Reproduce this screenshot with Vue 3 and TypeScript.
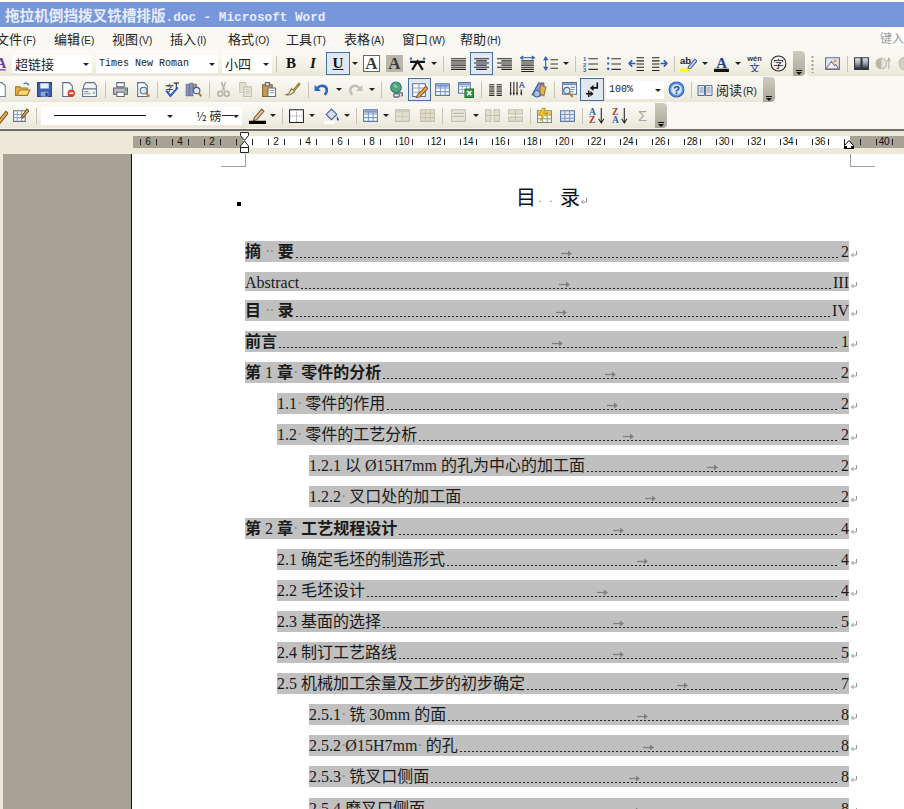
<template>
  <div class="word-window">
    <div class="title-bar">拖拉机倒挡拨叉铣槽排版<span class="title-latin">.doc - Microsoft Word</span></div>

    <div class="menu-bar">
      <span v-for="m in menus" :key="m[0]" class="menu-item">{{ m[0] }}<small>({{ m[1] }})</small></span>
      <span class="ask-box">键入</span>
    </div>

    <div class="toolbars">
      <div v-for="(row, r) in toolRows" :key="r" class="tool-line">
        <div v-for="(bar, b) in row" :key="b" class="toolbar" :class="bar.cls" :style="{ marginLeft: bar.left + 'px', width: bar.width + 'px' }">
          <template v-for="(it, i) in bar.items" :key="i">
            <div v-if="it.k === 'combo'" class="combo" :class="it.cls" :style="{ width: it.w + 'px' }">
              <span class="combo-text">{{ it.text }}</span>
              <i class="combo-line" v-if="it.line"></i>
              <i class="caret"></i>
            </div>
            <span v-else-if="it.k === 'sep'" class="sep" :style="{ width: it.w + 'px' }"></span>
            <span v-else-if="it.k === 'gap'" :style="{ width: it.w + 'px', flex: 'none' }"></span>
            <span v-else-if="it.k === 'arrow'" class="drop" :style="{ width: it.w + 'px' }"><i class="caret"></i></span>
            <span v-else-if="it.k === 'grip'" class="grip"></span>
            <span v-else-if="it.k === 'read'" class="read-btn" :style="{ width: it.w + 'px' }">
              <svg width="16" height="16" viewBox="0 0 16 16" v-html="icons.read"></svg>
              <span>阅读<small>(R)</small></span>
            </span>
            <span v-else-if="it.k === 'txt'" class="btn" :class="[it.cls, { active: it.on }]" :style="{ width: it.w + 'px' }">{{ it.text }}</span>
            <span v-else class="btn" :class="{ active: it.on }" :style="{ width: it.w + 'px', marginLeft: it.ml ? it.ml + 'px' : undefined }">
              <svg width="17" height="17" viewBox="0 0 16 16" v-html="icons[it.n!]"></svg>
            </span>
          </template>
          <span v-if="bar.chevron" class="chevron"><i></i></span>
        </div>
      </div>
    </div>

    <div class="ruler-band">
      <div class="ruler">
        <span v-for="c in rulerCells" :key="c.k" class="cell" :class="{ tick: c.tick }">{{ c.label }}</span>
        <svg class="indent-left" width="11" height="22" viewBox="0 0 11 22">
          <path d="M1.5 .5h8v3l-4 5-4-5zM5.500 9l4 5v1.500h-8V14zM1.500 15.500h8v5h-8z" fill="#fff" stroke="#222" />
        </svg>
        <svg class="indent-right" width="12" height="9" viewBox="0 0 12 9">
          <path d="M6 .5l4.500 5v3h-9v-3z" fill="#fff" stroke="#000" /><path d="M1 6h3v2.500H1zM8 6h3v2.500H8z" fill="#000" />
        </svg>
      </div>
    </div>

    <div class="doc-area">
      <aside class="side-gutter"></aside>
      <main class="page">
        <i class="crop crop-left"></i>
        <i class="crop crop-right"></i>
        <i class="anchor-mark"></i>
        <h1 class="toc-title">目<em>··</em>录<svg class="ret big" width="8" height="8" viewBox="0 0 8 8"><path d="M6.500 1v4H1.500M3.500 3l-2 2 2 2" fill="none" stroke="#999" /></svg></h1>
        <div class="toc">
          <div v-for="row in tocRows" :key="row.text" class="toc-row" :class="[`lv${row.lv}`, { bold: row.bold, short: row.short, tight: row.tight, wide: row.wide }]">
            <span class="toc-text" v-html="row.text"></span>
            <span class="leader"></span>
            <span class="toc-num">{{ row.num }}</span>
            <svg class="tab-arrow" :style="{ left: row.tab - indent[row.lv] - 5 + 'px' }" width="11" height="7" viewBox="0 0 11 7"><path d="M0 3.500h7" fill="none" stroke="#808080" stroke-width="1.300" /><path d="M7 .5l4 3-4 3z" fill="#808080" /></svg>
            <svg class="ret" width="8" height="8" viewBox="0 0 8 8"><path d="M6.500 1v4H1.500M3.500 3l-2 2 2 2" fill="none" stroke="#999" /></svg>
          </div>
        </div>
      </main>
    </div>
  </div>
</template>

<script setup lang="ts">
import { computed } from 'vue'

interface Item {
  k: string
  n?: string
  w?: number
  ml?: number
  on?: boolean
  text?: string
  cls?: string
  line?: boolean
}

interface Bar {
  left: number
  width: number
  cls?: string
  chevron?: boolean
  items: Item[]
}

interface TocRow {
  text: string
  lv: number
  tab: number
  num: string
  bold?: boolean
  short?: boolean
  tight?: boolean
  wide?: boolean
}

const indent: Record<number, number> = { 1: 245, 2: 277, 3: 309 }

const menus = [
  ['文件', 'F'], ['编辑', 'E'], ['视图', 'V'], ['插入', 'I'], ['格式', 'O'],
  ['工具', 'T'], ['表格', 'A'], ['窗口', 'W'], ['帮助', 'H']
]

const lines = (rows: number[][], color = '#222') =>
  rows.map(r => `<path d="M${r[0]} ${r[2]}.5H${r[1]}" stroke="${color}"/>`).join('')

const pageBase = '<path d="M3.500 1.500h6l3 3v10h-9z" fill="#fff" stroke="#5a6a86"/>'

const icons: Record<string, string> = {
  styleA: '<text x="2" y="12" font-size="13" font-weight="700" font-family="Liberation Serif" fill="#6a3fa0">A</text><path d="M1 14h10" stroke="#6a3fa0"/>',
  newdoc: '<path d="M3.500 1.500h6l3 3v10h-9z" fill="#fff" stroke="#6d7f9e"/>',
  open: '<path d="M1.500 5.500h4l1 1h6v7h-11z" fill="#e8b64a" stroke="#a87a20"/><path d="M3 13.500l2-5h10l-2.500 5z" fill="#f7d87c" stroke="#a87a20"/><path d="M9 3c2-2 4-1 5 1" fill="none" stroke="#2c6fb7"/>',
  save: '<path d="M1.500 1.500h13v13h-13z" fill="#3f62b2" stroke="#24408a"/><path d="M4 2h8v5H4z" fill="#e9eef8"/><path d="M4.500 10h7v4.500h-7z" fill="#8da6da"/><path d="M9 11h2v3H9z" fill="#24408a"/>',
  perm: pageBase + '<circle cx="11.500" cy="11.500" r="3.500" fill="#d9432f"/><path d="M9.500 11.500h4" stroke="#fff" stroke-width="1.500"/>',
  mail: '<path d="M4.500 1.500h8l2 3v3h-12v-3z" fill="#eef2f8" stroke="#66728a"/><path d="M1.500 7.500h13v7h-13z" fill="#f6f6f4" stroke="#66728a"/><path d="M3 10h4M3 12h6" stroke="#8c96aa"/><path d="M11 10h2v2h-2z" fill="#9db2d5"/>',
  print: '<path d="M4.500 1.500h7v4h-7z" fill="#fff" stroke="#667"/><path d="M1.500 6.500h13v6h-13z" fill="#b9bcc6" stroke="#5c6070"/><path d="M4.500 10.500h7v4h-7z" fill="#fff" stroke="#667"/><path d="M12 8h2v1.500h-2z" fill="#38a838"/>',
  preview: pageBase + '<circle cx="9" cy="9" r="3.200" fill="#d5e8f8" stroke="#5a6a86"/><path d="M11.500 11.500l3 3" stroke="#c08a2a" stroke-width="2"/>',
  spell: '<text x="2" y="9" font-size="8" font-family="Noto Sans CJK SC" fill="#333">字</text><path d="M10 2h5M12.500 2v5" stroke="#333"/><path d="M3 9l4 5 7-8" fill="none" stroke="#2d62c4" stroke-width="2"/>',
  research: '<path d="M1 3h3v11H1zM4.500 2h3v12h-3z" fill="#8a94bd" stroke="#555b80" stroke-width=".6"/><path d="M8 3h3v7H8z" fill="#c28f6a" stroke="#6b5a50" stroke-width=".6"/><circle cx="11" cy="9" r="3" fill="#dcecf8" stroke="#4b5b80"/><path d="M13 11.500l2.500 3" stroke="#b9822b" stroke-width="2"/>',
  cut: '<path d="M6 1l3 8M10 1L7 9" stroke="#b5b2a5" stroke-width="1.400"/><circle cx="5" cy="12" r="2.300" fill="none" stroke="#b5b2a5" stroke-width="1.500"/><circle cx="11" cy="12" r="2.300" fill="none" stroke="#b5b2a5" stroke-width="1.500"/>',
  copy: '<path d="M2.500 1.500h6v9h-6z" fill="#e4e1d5" stroke="#c9c6b8"/><path d="M6.500 5.500h7v9h-7z" fill="#eceadf" stroke="#c0bdad"/><path d="M8 8h4M8 10h4M8 12h4" stroke="#c9c6b8"/>',
  paste: '<path d="M2.500 3.500h9v11h-9z" fill="#c79a5a" stroke="#84602c"/><path d="M5 1.500h4v3H5z" fill="#e8e4d0" stroke="#667"/><path d="M7.500 6.500h7v8h-7z" fill="#fff" stroke="#5a6a86"/><path d="M9 9h4M9 11h4" stroke="#8899b5"/>',
  painter: '<path d="M9 8l5-6 1 1-5 6z" fill="#f0d060" stroke="#8a7a30"/><path d="M2 13c3-1 4-3 5-6l3 3c-2 2-4 4-8 3z" fill="#e8e2bc" stroke="#8a7a50"/>',
  undo: '<path d="M4 7c3-4 9-3 9 2 0 2-1 3-2 4" fill="none" stroke="#2a66c8" stroke-width="2.500"/><path d="M1.500 3.500v6h6z" fill="#2a66c8"/>',
  redo: '<path d="M12 7C9 3 3 4 3 9c0 2 1 3 2 4" fill="none" stroke="#c4c2b6" stroke-width="2.500"/><path d="M14.500 3.500v6h-6z" fill="#c4c2b6"/>',
  link: '<circle cx="7.500" cy="6" r="5" fill="#4fa86c" stroke="#2f6f88"/><path d="M5 3c2 0 3 1 4 3-2 1-3 0-4-3z" fill="#8fc8e8"/><path d="M6 12h4a2 2 0 0 1 0 3H6a2 2 0 0 1 0-3zM10 11h3a2 2 0 0 1 0 3h-1" fill="none" stroke="#667088" stroke-width="1.300"/>',
  tablesEdit: '<path d="M1.500 2.500h12v12h-12z" fill="#fff" stroke="#60708c"/><path d="M1.500 6.500h12M1.500 10.500h12M7.500 2.500v12" stroke="#8fa0bb"/><path d="M6 13l8-8 2 2-8 8-3 .5z" fill="#e8b050" stroke="#87622a"/>',
  table: '<path d="M1.500 2.500h13v11h-13z" fill="#fff" stroke="#5a76a8"/><path d="M2 3h12v2.500H2z" fill="#7b9bd0"/><path d="M1.500 6.500h13M1.500 10h13M6 3v10.500M10.500 3v10.500" stroke="#7b97c4"/>',
  tableExcel: '<path d="M1.500 1.500h11v10h-11z" fill="#fff" stroke="#5a76a8"/><path d="M2 2h10v2H2z" fill="#7b9bd0"/><path d="M1.500 5h11M1.500 8h11M5 2v10M9 2v10" stroke="#9cb2d2"/><path d="M7.500 7.500h8v8h-8z" fill="#3d9a4d" stroke="#216a30"/><path d="M9.500 9.500l4 4M13.500 9.500l-4 4" stroke="#fff" stroke-width="1.300"/>',
  cols: lines([[2, 7, 3], [2, 7, 5], [2, 7, 7], [2, 7, 9], [2, 7, 11], [2, 7, 13], [9, 14, 3], [9, 14, 5], [9, 14, 7], [9, 14, 9], [9, 14, 11], [9, 14, 13]]),
  textdir: '<path d="M2.500 1v11M5.500 1v11M8.500 1v11" stroke="#222"/><path d="M1.500 11l1 3 1-3zM4.500 11l1 3 1-3zM7.500 11l1 3 1-3zM11.500 11l1 3 1-3z" fill="#222"/><path d="M12.500 8v4" stroke="#222"/><text x="10" y="7" font-size="8" font-weight="700" font-family="Liberation Sans" fill="#4a62a8">A</text>',
  wordart: '<path d="M2 13L8 2h5v7h-3v5z" fill="#7f9ad8" stroke="#45609c"/><path d="M10 3l5 3-2 8-4-2z" fill="#e8b050" stroke="#98702a"/><circle cx="6.500" cy="12" r="3" fill="#aebde2" stroke="#45609c"/>',
  docmap: '<path d="M1.500 1.500h13v11h-13z" fill="#fff" stroke="#55708f"/><path d="M2 2h12v2H2z" fill="#6f92c6"/><path d="M9 6h4M9 8h4M9 10h3" stroke="#7f93b0"/><circle cx="5.500" cy="9" r="3" fill="#d5e8f8" stroke="#5a6a86"/><path d="M8 11.500l3 3.500" stroke="#b9822b" stroke-width="2"/>',
  expand: '<path d="M12.500 1.500v5H8" fill="none" stroke="#111" stroke-width="1.500"/><path d="M9 3.500L5.500 6.500 9 9.500z" fill="#111"/><path d="M2 12h6" stroke="#111" stroke-width="1.300"/><path d="M6 9.500l3 2.500-3 2.500z" fill="#111"/><path d="M4.500 9v6" stroke="#111" stroke-width="1.300"/>',
  help: '<circle cx="8" cy="8" r="7" fill="#5d93e2" stroke="#2a5fb4"/><circle cx="8" cy="8" r="5" fill="#d6e6fb"/><text x="8" y="12" text-anchor="middle" font-size="11" font-weight="700" font-family="Liberation Sans" fill="#1d50aa">?</text>',
  read: '<path d="M1 3.500h6.500v10H1zM8.500 3.500H15v10H8.500z" fill="#e2e7f2" stroke="#5f6f8c"/><path d="M2.500 6h4M2.500 8h4M2.500 10h4M9.500 6h4M9.500 8h4M9.500 10h4" stroke="#8b99b3"/>',
  justify: lines([[1, 15, 3], [1, 15, 5], [1, 15, 7], [1, 15, 9], [1, 15, 11], [1, 15, 13]], '#222'),
  center: lines([[1, 15, 3], [3, 13, 5], [1, 15, 7], [3, 13, 9], [1, 15, 11], [3, 13, 13]], '#222'),
  right: lines([[1, 15, 3], [5, 15, 5], [1, 15, 7], [5, 15, 9], [1, 15, 11], [5, 15, 13]], '#222'),
  distribute: lines([[2, 14, 5], [2, 14, 7], [2, 14, 9], [2, 14, 11], [2, 14, 13], [2, 14, 15]], '#222') + '<path d="M1 2.500h14M4 1L1.500 2.500 4 4M12 1l2.500 1.500L12 4" fill="none" stroke="#2a5fb4"/>',
  spacing: '<path d="M3.500 2.500v11" stroke="#2a5fb4"/><path d="M1 5l2.500-4L6 5zM1 11l2.500 4L6 11z" fill="#2a5fb4"/>' + lines([[8, 15, 4], [8, 15, 8], [8, 15, 12]], '#333'),
  numbered: '<text x="1" y="6" font-size="5.500" font-weight="700" font-family="Liberation Sans" fill="#2a5fb4">1</text><text x="1" y="11" font-size="5.500" font-weight="700" font-family="Liberation Sans" fill="#2a5fb4">2</text><text x="1" y="16" font-size="5.500" font-weight="700" font-family="Liberation Sans" fill="#2a5fb4">3</text>' + lines([[6, 15, 3], [6, 15, 8], [6, 15, 13]], '#333'),
  bullets: '<path d="M2 2h2v2H2zM2 7h2v2H2zM2 12h2v2H2z" fill="#2a5fb4"/>' + lines([[6, 15, 3], [6, 15, 8], [6, 15, 13]], '#333'),
  outdent: lines([[8, 15, 2], [8, 15, 5], [8, 15, 8], [8, 15, 11], [8, 15, 14]], '#222') + '<path d="M1 8h6M4 5L1 8l3 3" fill="none" stroke="#2a5fb4" stroke-width="1.500"/>',
  indent: lines([[1, 8, 2], [1, 8, 5], [1, 8, 8], [1, 8, 11], [1, 8, 14]], '#222') + '<path d="M15 8H9M12 5l3 3-3 3" fill="none" stroke="#2a5fb4" stroke-width="1.500"/>',
  highlight: '<text x="0" y="8" font-size="9" font-weight="700" font-family="Liberation Sans" fill="#222">ab</text><path d="M8 11l6-7 2 1.500-6 7-2.500.5z" fill="#cfd8ea" stroke="#45609c"/><path d="M0 13h9v3H0z" fill="#ffff00"/>',
  fontColor: '<text x="8" y="12" text-anchor="middle" font-size="14" font-weight="700" font-family="Liberation Serif" fill="#25408f">A</text><path d="M1 13h14v3H1z" fill="#111"/>',
  wen: '<text x="8" y="6" text-anchor="middle" font-size="7" font-weight="700" font-family="Liberation Sans" fill="#333">wén</text><text x="8" y="16" text-anchor="middle" font-size="10" font-family="Noto Sans CJK SC" fill="#24408a">文</text>',
  zi: '<circle cx="8" cy="8" r="7" fill="none" stroke="#222"/><text x="8" y="12" text-anchor="middle" font-size="10" font-family="Noto Sans CJK SC" fill="#222">字</text>',
  scaleA: '<path d="M3 14L8 6l5 8M1 6.500h14" fill="none" stroke="#111" stroke-width="2"/><path d="M3 3.500h-2.500M1.800 2v3M15.500 3.500H13M14.200 2v3" stroke="#2a5fb4"/><path d="M8 1v4" stroke="#2a5fb4" opacity="0"/>',
  picture: '<path d="M1.500 2.500h13v11h-13z" fill="#dbe8f6" stroke="#60708c"/><path d="M2 13l5-7 3 4 1-1 3 4z" fill="#f4f4f4" stroke="#8a7a90"/><circle cx="10.500" cy="5.500" r="1.500" fill="#e8a050"/>',
  compare: '<path d="M1.500 2.500h6v11h-6zM8.500 2.500h6v11h-6z" fill="url(#gr)" stroke="#30343d"/><defs><linearGradient id="gr" x1="0" y1="0" x2="0" y2="1"><stop offset="0" stop-color="#f0f1f4"/><stop offset=".5" stop-color="#9a9ca6"/><stop offset="1" stop-color="#22252c"/></linearGradient></defs>',
  contrast: '<circle cx="6" cy="8" r="5" fill="#e6e4da" stroke="#bdbbae"/><path d="M6 3a5 5 0 0 0 0 10z" fill="#b8b6a8"/><path d="M13 13V4M11.500 6L13 3l1.500 3" fill="none" stroke="#b5b3a6"/>',
  bright: '<circle cx="8" cy="8" r="6" fill="#d2d0c4" stroke="#bdbbae"/>',
  pencil: '<path d="M6 14l8-10 2 2-8 10z" fill="#e8b050" stroke="#7a5a28"/>',
  tableProps: '<path d="M1.500 3.500h11v10h-11z" fill="#fff" stroke="#60708c"/><path d="M1.500 7h11M1.500 10h11M5 3.500v10M9 3.500v10" stroke="#8fa0bb"/><path d="M9 9l5-7 2 1.500-6 7z" fill="#e8b050" stroke="#7a5a28"/>',
  borders: '<path d="M1.500 2.500h13v12h-13z" fill="#fff" stroke="#222"/><path d="M8 3v11M2 8.500h12" stroke="#999" stroke-dasharray="1 1"/>',
  fill: '<path d="M3 7l5-5 5 5-5 5z" fill="#d9dfeb" stroke="#45609c"/><path d="M13 8c1 2 2 3 2 4s-2 1-2 0 0-2 0-4z" fill="#2a5fb4"/><path d="M1 13h10v3H1z" fill="#fff"/>',
  pen: '<path d="M5 10l7-8 2 2-7 8-3 1z" fill="#e8c5a0" stroke="#7a5a28"/><path d="M0 13h16v3H0z" fill="#000"/>',
  merge: '<path d="M1.500 2.500h13v11h-13z" fill="#e3dfcf" stroke="#c4c0ae"/><path d="M2 3h12v2H2z" fill="#cfcabb"/><path d="M1.500 9h13M8 5v8" stroke="#d0ccbb"/>',
  split: '<path d="M1.500 2.500h13v11h-13z" fill="#e3dfcf" stroke="#c4c0ae"/><path d="M1.500 6h13M1.500 10h13M6 3v10M10.500 3v10" stroke="#c6c2b1"/>',
  alignCell: '<path d="M1.500 2.500h13v11h-13z" fill="#e8e5d8" stroke="#c4c0ae"/><path d="M3 6h10M3 9h10" stroke="#bdb9a8"/>',
  distRows: '<path d="M1.500 2.500h5v11h-5zM9.500 2.500h5v11h-5z" fill="#e3dfcf" stroke="#c4c0ae"/><path d="M1 8h14" stroke="#c4c0ae"/>',
  distCols: '<path d="M1.500 2.500h13v4h-13zM1.500 9.500h13v4h-13z" fill="#e3dfcf" stroke="#c4c0ae"/><path d="M8 2v12" stroke="#c4c0ae"/>',
  autoFormat: '<path d="M1.500 3.500h13v11h-13z" fill="#fff" stroke="#7a8a60"/><path d="M2 4h12v3H2z" fill="#f0c050"/><path d="M1.500 7.500h13M1.500 11h13M6 4v10M10.500 4v10" stroke="#8fa060"/><path d="M6 1L3 8h3L4 13l6-7H7l2-5z" fill="#f4c830" stroke="#9a7a10" stroke-width=".5"/>',
  tableLight: '<path d="M1.500 3.500h13v10h-13z" fill="#e6ecf6" stroke="#5a76a8"/><path d="M1.500 7h13M1.500 10.500h13M5.500 3.500v10M10 3.500v10" stroke="#7b97c4"/>',
  sortAZ: '<text x="1" y="7.500" font-size="9" font-weight="700" font-family="Liberation Serif" fill="#2a5fb4">A</text><text x="1" y="15.500" font-size="9" font-weight="700" font-family="Liberation Serif" fill="#a83a2a">Z</text><path d="M12.500 1v13M10 11l2.500 4 2.500-4" fill="none" stroke="#222"/>',
  sortZA: '<text x="1" y="7.500" font-size="9" font-weight="700" font-family="Liberation Serif" fill="#a83a2a">Z</text><text x="1" y="15.500" font-size="9" font-weight="700" font-family="Liberation Serif" fill="#2a5fb4">A</text><path d="M12.500 1v13M10 11l2.500 4 2.500-4" fill="none" stroke="#222"/>',
  sigma: '<text x="8" y="13" text-anchor="middle" font-size="14" font-family="Liberation Sans" fill="#aaa89c">Σ</text>'
}

const ic = (n: string, w = 23, on = false): Item => ({ k: 'ic', n, w, on })
const sep = (w = 8): Item => ({ k: 'sep', w })
const drop = (w = 10): Item => ({ k: 'arrow', w })
const gap = (w: number): Item => ({ k: 'gap', w })
const combo = (text: string, w: number, cls = ''): Item => ({ k: 'combo', text, w, cls })
const txt = (text: string, w: number, cls: string, on = false): Item => ({ k: 'txt', text, w, cls, on })

const toolRows: Bar[][] = [
  [
    {
      left: -8, width: 813, chevron: true,
      items: [
        ic('styleA', 20), combo('超链接', 80, 'cjk'), gap(4), combo('Times New Roman', 122, 'mono'), gap(4),
        combo('小四', 50, 'cjk'), sep(), txt('B', 22, 'fmt-b'), txt('I', 22, 'fmt-i'), gap(2),
        txt('U', 24, 'fmt-u', true), drop(), txt('A', 23, 'fmt-box'), txt('A', 23, 'fmt-shade'), ic('scaleA'), drop(), sep(),
        ic('justify'), ic('center', 23, true), ic('right'), ic('distribute'), ic('spacing', 22), drop(), sep(),
        ic('numbered'), ic('bullets'), ic('outdent'), ic('indent'), sep(6),
        ic('highlight'), drop(), ic('fontColor'), drop(), ic('wen'), ic('zi', 25)
      ]
    },
    {
      left: 2, width: 97, cls: 'plain',
      items: [
        { k: 'grip' }, ic('picture', 22), sep(7), ic('compare', 22), ic('contrast', 23), ic('bright', 20)
      ]
    }
  ],
  [
    {
      left: -11, width: 786, chevron: true,
      items: [
        ic('newdoc', 22), ic('open', 22), ic('save', 23), ic('perm', 22), ic('mail', 23), sep(),
        ic('print', 22), ic('preview'), sep(6), ic('spell', 22), ic('research'), sep(),
        ic('cut', 21), ic('copy'), ic('paste'), ic('painter', 25), sep(5),
        ic('undo'), drop(11), ic('redo'), drop(), sep(), ic('link', 22), gap(1), ic('tablesEdit', 23, true),
        ic('table'), ic('tableExcel'), sep(), ic('cols', 20), ic('textdir', 22), ic('wordart'), sep(),
        ic('docmap', 22), ic('expand', 24, true), gap(2), combo('100%', 58, 'mono'), gap(1), ic('help', 22), sep(7),
        { k: 'read', w: 69 }
      ]
    }
  ],
  [
    {
      left: -11, width: 678, chevron: true,
      items: [
        ic('pencil', 20), ic('tableProps', 22), sep(10),
        { k: 'combo', text: '', w: 135, line: true }, combo('½ 磅一', 66, 'weight'), gap(5),
        ic('pen', 21), drop(), sep(7), ic('borders', 22), drop(), gap(3), ic('fill', 22), drop(), sep(7),
        ic('table', 22), drop(), ic('merge', 22), gap(3), ic('split', 22), sep(8), ic('alignCell', 25), drop(),
        ic('distRows', 23), ic('distCols', 22), sep(7), ic('autoFormat', 23), ic('tableLight', 23), sep(5),
        ic('sortAZ', 24), ic('sortZA', 23), ic('sigma', 22)
      ]
    }
  ]
]

const rulerCells = computed(() => {
  const cells = []
  for (let k = -13; k <= 83; k++) {
    const isLabel = k % 4 === 0
    const units = Math.abs(k / 2)
    cells.push({
      k,
      tick: k % 2 !== 0,
      label: isLabel && k !== 0 && k !== 76 ? String(units) : ''
    })
  }
  return cells
})

const d = '<i class="sp">·</i>'
const n = (v: number) => `<i class="nb">${v}</i>`

const tocRows: TocRow[] = [
  { text: `摘 ${d}${d} 要`, lv: 1, tab: 566, num: '2', bold: true },
  { text: 'Abstract', lv: 1, tab: 564, num: 'III', short: true },
  { text: `目 ${d}${d} 录`, lv: 1, tab: 561, num: 'IV', bold: true, tight: true },
  { text: '前言', lv: 1, tab: 557, num: '1', bold: true },
  { text: `第 ${n(1)} 章${d} 零件的分析`, lv: 1, tab: 610, num: '2', bold: true },
  { text: `1.1${d} 零件的作用`, lv: 2, tab: 612, num: '2' },
  { text: `1.2${d} 零件的工艺分析`, lv: 2, tab: 628, num: '2' },
  { text: '1.2.1 以 Ø15H7mm 的孔为中心的加工面', lv: 3, tab: 712, num: '2' },
  { text: `1.2.2${d} 叉口处的加工面`, lv: 3, tab: 650, num: '2' },
  { text: `第 ${n(2)} 章${d} 工艺规程设计`, lv: 1, tab: 618, num: '4', bold: true, wide: true },
  { text: '2.1 确定毛坯的制造形式', lv: 2, tab: 642, num: '4' },
  { text: '2.2 毛坯设计', lv: 2, tab: 602, num: '4' },
  { text: '2.3 基面的选择', lv: 2, tab: 618, num: '5' },
  { text: '2.4 制订工艺路线', lv: 2, tab: 618, num: '5' },
  { text: '2.5 机械加工余量及工步的初步确定', lv: 2, tab: 682, num: '7' },
  { text: `2.5.1${d} 铣 30mm 的面`, lv: 3, tab: 642, num: '8' },
  { text: `2.5.2${d}Ø15H7mm${d} 的孔`, lv: 3, tab: 648, num: '8' },
  { text: `2.5.3${d} 铣叉口侧面`, lv: 3, tab: 634, num: '8' },
  { text: '2.5.4 磨叉口侧面', lv: 3, tab: 634, num: '8', wide: true }
]
</script>

<style>
html, body {
  margin: 0;
  background: #fff;
}
</style>

<style scoped>
.word-window {
  width: 904px;
  height: 809px;
  overflow: hidden;
  display: flex;
  flex-direction: column;
  font-family: "Noto Sans CJK SC", "Liberation Sans", sans-serif;
  background: #fff;
}

.title-bar {
  flex: none;
  height: 25px;
  margin-top: 2px;
  padding-left: 5px;
  box-sizing: border-box;
  background: #7896dc;
  color: #e6ecfa;
  font-size: 14.600px;
  font-weight: 700;
  line-height: 25px;
  white-space: nowrap;
}

.title-latin {
  font-family: "Liberation Mono", monospace;
  font-size: 12.700px;
}

.menu-bar {
  flex: none;
  height: 23px;
  display: flex;
  align-items: center;
  background: #f9f8f3;
  position: relative;
  font-size: 13px;
  color: #222;
  margin-left: -4px;
}

.menu-item {
  flex: none;
  width: 58px;
  white-space: nowrap;
}

.menu-item small, .read-btn small {
  font-family: "Liberation Sans", sans-serif;
  font-size: 10px;
  margin-left: 1px;
}

.ask-box {
  position: absolute;
  right: 0;
  top: 2px;
  width: 24px;
  height: 17px;
  background: #fff;
  color: #9a9a9a;
  font-size: 12px;
  line-height: 17px;
  overflow: hidden;
  white-space: nowrap;
}

.toolbars {
  flex: none;
  height: 78px;
  padding-top: 1px;
  background: #f9f8f3;
  border-bottom: 2px solid #716f64;
}

.tool-line {
  height: 26px;
  display: flex;
}

.toolbar {
  flex: none;
  height: 25px;
  display: flex;
  align-items: center;
  position: relative;
  border-radius: 0 4px 4px 0;
  background: linear-gradient(#fbfaf6, #f0eee3 70%, #e9e6d8);
  box-sizing: border-box;
  overflow: hidden;
}

.toolbar.plain {
  border-radius: 4px 0 0 4px;
}

.btn {
  flex: none;
  height: 23px;
  display: flex;
  align-items: center;
  justify-content: center;
  box-sizing: border-box;
  font-family: "Liberation Serif", serif;
  color: #111;
}

.btn.active {
  background: #e2e8f3;
  border: 1px solid #44709f;
}

.fmt-b {
  font-size: 15px;
  font-weight: 700;
}

.fmt-i {
  font-size: 15px;
  font-weight: 700;
  font-style: italic;
}

.fmt-u {
  font-size: 15px;
  font-weight: 700;
  text-decoration: underline;
}

.fmt-box, .fmt-shade {
  flex: none;
  height: 17px;
  max-width: 17px;
  margin: 0 3px;
  font-size: 17px;
  font-weight: 700;
  color: #3a3a3a;
}

.fmt-box {
  border: 1px solid #666;
  background: #fff;
}

.fmt-shade {
  background: #b8b6ab;
}

.sep {
  flex: none;
  height: 18px;
  position: relative;
}

.sep::after {
  content: "";
  position: absolute;
  left: 50%;
  top: 1px;
  width: 1px;
  height: 16px;
  background: #c8c5b6;
}

.drop {
  flex: none;
  height: 23px;
  display: flex;
  align-items: center;
  justify-content: center;
}

.caret {
  display: block;
  width: 0;
  height: 0;
  border-left: 3px solid transparent;
  border-right: 3px solid transparent;
  border-top: 3px solid #222;
}

.combo {
  flex: none;
  height: 18px;
  background: #fff;
  position: relative;
  display: flex;
  align-items: center;
  box-sizing: border-box;
  padding-left: 3px;
  color: #222;
  white-space: nowrap;
}

.combo .caret {
  position: absolute;
  right: 3px;
  top: 8px;
}

.combo-text {
  font-size: 14px;
}

.combo.mono .combo-text {
  font-family: "Liberation Mono", monospace;
  font-size: 10px;
}

.combo.weight {
  padding-left: 20px;
}

.combo.weight .combo-text {
  font-size: 12px;
}

.combo.cjk .combo-text {
  font-size: 13px;
}

.combo-line {
  position: absolute;
  left: 13px;
  top: 8px;
  width: 92px;
  height: 1px;
  background: #111;
}

.grip {
  flex: none;
  width: 3px;
  height: 18px;
  margin: 0 7px 0 4px;
  background: radial-gradient(circle, #9a988a 1px, transparent 1.200px) 0 0 / 3px 4px;
}

.read-btn {
  flex: none;
  display: flex;
  align-items: center;
  gap: 3px;
  padding-left: 3px;
  box-sizing: border-box;
  height: 23px;
  font-size: 13px;
  color: #222;
  white-space: nowrap;
}

.chevron {
  position: absolute;
  right: 0;
  top: 0;
  width: 12px;
  height: 100%;
  background: linear-gradient(#cfccbf, #a9a698);
  border-radius: 0 4px 4px 0;
}

.chevron i {
  position: absolute;
  left: 3px;
  bottom: 5px;
  width: 6px;
  height: 1px;
  background: #111;
}

.chevron i::after {
  content: "";
  position: absolute;
  left: 0;
  top: 2px;
  border-left: 3px solid transparent;
  border-right: 3px solid transparent;
  border-top: 3px solid #111;
}

.ruler-band {
  flex: none;
  height: 23px;
  background: #ece9d8;
  box-sizing: border-box;
  padding-top: 5px;
}

.ruler {
  height: 12px;
  display: flex;
  padding-left: 136px;
  position: relative;
  background: linear-gradient(to right, transparent 133px, #a6a296 133px, #a6a296 243px, #fff 243px, #fff 850px, #a6a296 850px);
}

.cell {
  flex: none;
  width: 8px;
  display: flex;
  justify-content: center;
  font-family: "Liberation Sans", sans-serif;
  font-size: 10px;
  line-height: 12px;
  color: #111;
  white-space: nowrap;
  position: relative;
  letter-spacing: -0.300px;
}

.cell.tick::after {
  content: "";
  position: absolute;
  left: 4px;
  top: 3px;
  width: 1px;
  height: 6px;
  background: #222;
}

.indent-left {
  position: absolute;
  left: 239px;
  top: -4px;
}

.indent-right {
  position: absolute;
  left: 843px;
  top: 4px;
}

.doc-area {
  flex: 1;
  display: flex;
  min-height: 0;
}

.side-gutter {
  flex: none;
  width: 128px;
  background: #a6a296;
  border-left: 3px solid #ece9d8;
  border-right: 1px solid #111;
}

.page {
  flex: 1;
  position: relative;
  background: #fff;
  padding-top: 31px;
  box-sizing: border-box;
}

.crop {
  position: absolute;
  top: 0;
  width: 24px;
  height: 12px;
  border-bottom: 1px solid #a0a0a0;
}

.crop-left {
  left: 89px;
  border-right: 1px solid #a0a0a0;
}

.crop-right {
  left: 718px;
  border-left: 1px solid #a0a0a0;
}

.anchor-mark {
  position: absolute;
  left: 105px;
  top: 48px;
  width: 4px;
  height: 4px;
  background: #000;
}

.toc-title {
  margin: 0 0 0 113px;
  height: 24px;
  width: 604px;
  padding-left: 10px;
  box-sizing: border-box;
  text-align: center;
  font-size: 20px;
  font-weight: 400;
  line-height: 24px;
  color: #111;
  white-space: nowrap;
}

.toc-title em {
  font-family: "Liberation Serif", serif;
  font-style: normal;
  color: #888;
  margin-left: 2px;
  letter-spacing: 7px;
  font-size: 12px;
}

.ret {
  flex: none;
}

.toc {
  margin-top: 32px;
  margin-left: 113px;
  width: 604px;
  display: flex;
  flex-direction: column;
}

.toc-row {
  flex: none;
  height: 21px;
  margin-top: 10px;
  display: flex;
  position: relative;
  background: #c0c0c0;
  font-family: "Liberation Serif", "Noto Sans CJK SC", serif;
  font-size: 16px;
  line-height: 21px;
  color: #1a1a1a;
  white-space: nowrap;
}

.toc-row:first-child {
  margin-top: 0;
}

.toc-row.short {
  height: 19px;
}

.toc-row.tight {
  margin-top: 9px;
}

.toc-row.wide {
  margin-top: 11px;
}

.lv2 {
  margin-left: 32px;
}

.lv3 {
  margin-left: 64px;
}

.toc-row.bold .toc-text {
  font-weight: 700;
}

.toc-text :deep(.sp) {
  font-style: normal;
  font-weight: 400;
  color: #8c8c8c;
  margin-right: -1px;
}

.toc-text :deep(.nb) {
  font-style: normal;
  font-weight: 400;
}

.leader {
  flex: 1;
  min-width: 0;
  height: 1px;
  margin: 16px 2px 0;
  background: repeating-linear-gradient(to right, #222 0 2px, transparent 2px 4px);
}

.toc-num {
  flex: none;
}

.tab-arrow {
  position: absolute;
  top: 9px;
}

.toc-row > .ret {
  position: absolute;
  right: -9px;
  top: 9px;
}
</style>
